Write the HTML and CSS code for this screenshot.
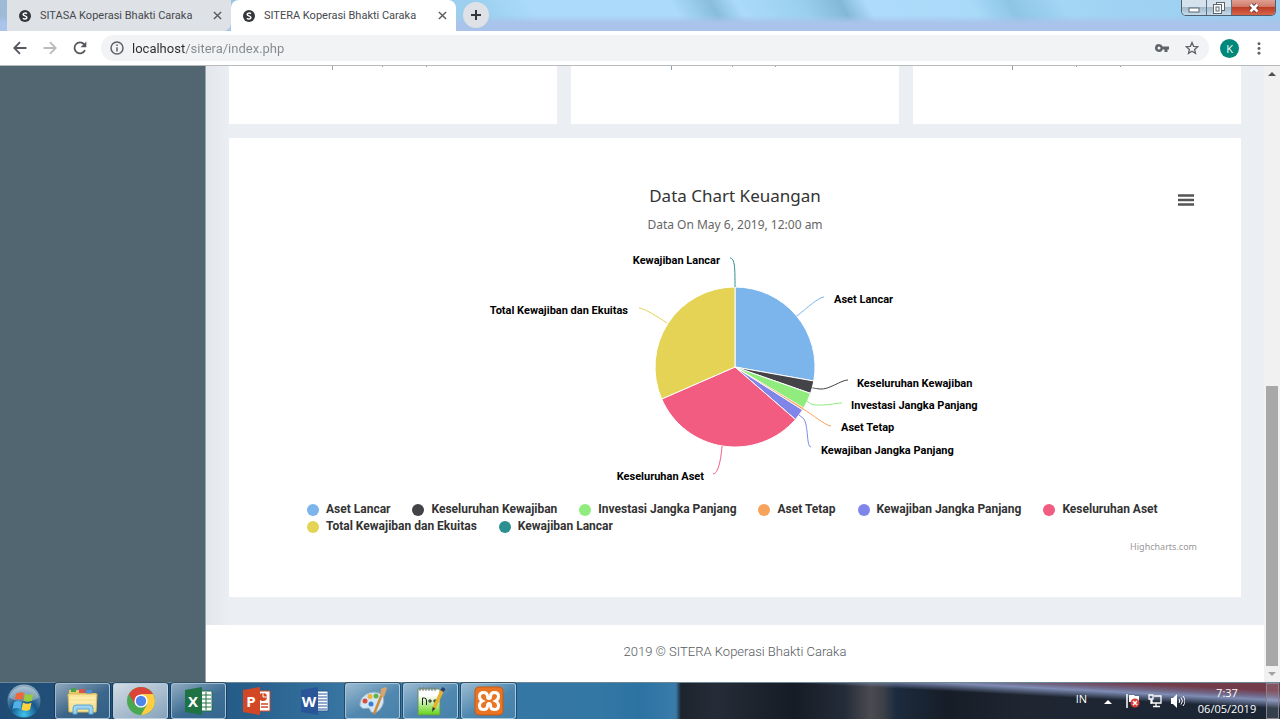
FILE: index.html
```html
<!DOCTYPE html>
<html lang="id">
<head>
<meta charset="utf-8">
<title>SITERA Koperasi Bhakti Caraka</title>
<link rel="stylesheet" href="styles.css">
</head>
<body>
<header class="titlebar">
  <nav class="tabs" aria-label="Tabs">
    <div class="tab">
      <svg class="favicon" viewBox="0 0 12 12"><circle cx="6" cy="6" r="6"/><path d="M8 3.600C6.500 2.600 4 3 4.200 4.600C4.400 6 7.800 5.800 7.900 7.500C7.900 9.200 5 9.300 3.900 8.200"/></svg>
      <a class="tab-title" href="#">SITASA Koperasi Bhakti Caraka</a>
      <button class="tab-close" aria-label="Close tab"><svg viewBox="0 0 10 10"><path d="M1 1l8 8M9 1L1 9"/></svg></button>
    </div>
    <div class="tab tab-active">
      <svg class="favicon" viewBox="0 0 12 12"><circle cx="6" cy="6" r="6"/><path d="M8 3.600C6.500 2.600 4 3 4.200 4.600C4.400 6 7.800 5.800 7.900 7.500C7.900 9.200 5 9.300 3.900 8.200"/></svg>
      <a class="tab-title" href="#">SITERA Koperasi Bhakti Caraka</a>
      <button class="tab-close" aria-label="Close tab"><svg viewBox="0 0 10 10"><path d="M1 1l8 8M9 1L1 9"/></svg></button>
    </div>
    <button class="new-tab" aria-label="New tab"><svg viewBox="0 0 12 12"><path d="M6 1v10M1 6h10"/></svg></button>
  </nav>
  <div class="window-controls">
    <button class="win-btn" aria-label="Minimize"><svg width="12" height="12" viewBox="0 0 12 12"><rect x="1" y="6" width="10" height="4" fill="#fff" stroke="#5b6672"/></svg></button>
    <button class="win-btn" aria-label="Restore"><svg width="12" height="12" viewBox="0 0 12 12" stroke="#5b6672" fill="#fff"><rect x="3.500" y=".5" width="8" height="8"/><rect x=".5" y="2.500" width="8" height="9"/><rect x="3" y="5" width="3" height="4"/></svg></button>
    <button class="win-btn win-close" aria-label="Close"><svg width="12" height="12" viewBox="0 0 12 12"><path d="M2.500 2.500l7 7M9.500 2.500l-7 7" stroke="#6b3a3a" stroke-width="4.500"/><path d="M2.500 2.500l7 7M9.500 2.500l-7 7" stroke="#fff" stroke-width="2.600"/></svg></button>
  </div>
</header>

<div class="toolbar">
  <button class="nav-btn" aria-label="Back"><svg viewBox="0 0 14 14"><path d="M13.500 7H1.500M7 1.200L1.300 7L7 12.800"/></svg></button>
  <button class="nav-btn nav-off" aria-label="Forward"><svg viewBox="0 0 14 14"><path d="M.5 7h12M7 1.200L12.700 7L7 12.800"/></svg></button>
  <button class="nav-btn" aria-label="Reload"><svg viewBox="0 0 14 14"><path d="M12 9.200A5.500 5.500 0 1 1 11.200 3.300"/><path class="solid" d="M13.300.500v5.700H7.600z"/></svg></button>
  <div class="omnibox">
    <svg class="info" viewBox="0 0 14 14"><circle cx="7" cy="7" r="6"/><path d="M7 6.200v4.300M7 3.500v1.600"/></svg>
    <input class="url" type="text" aria-label="Address" value="localhost/sitera/index.php">
    <button class="omni-btn" aria-label="Passwords"><svg viewBox="0 0 14 14"><path fill="#5f6368" fill-rule="evenodd" d="M4 3a4 4 0 1 0 3.700 5.500H9.500V11h3V8.500H14V5.500H7.700A4 4 0 0 0 4 3zM4 5.500a1.500 1.500 0 1 1 0 3a1.500 1.500 0 0 1 0-3z"/></svg></button>
    <button class="omni-btn" aria-label="Bookmark"><svg viewBox="0 0 14 14"><path d="M7 1.500l1.600 3.800 4.100.4-3.100 2.700.9 4L7 10.300l-3.500 2.100.9-4L1.300 5.700l4.100-.4z" fill="none" stroke="#5f6368" stroke-width="1.300"/></svg></button>
  </div>
  <button class="avatar" aria-label="Profile">K</button>
  <button class="more" aria-label="Menu"><svg viewBox="0 0 4 14" fill="#5f6368"><circle cx="2" cy="2" r="1.600"/><circle cx="2" cy="7" r="1.600"/><circle cx="2" cy="12" r="1.600"/></svg></button>
</div>

<div class="viewport">
  <aside class="sidebar"></aside>
  <main class="page">
    <div class="content">
      <div class="cards">
        <section class="card small"><svg width="220" height="4" stroke="#a5a09f"><path d="M103.500 0v4M153.500 0v1M197.500 0v1"/></svg></section>
        <section class="card small"><svg width="220" height="4" stroke="#8fa0ae"><path d="M100.500 0v4M161.500 0v1M204.500 0v1"/></svg></section>
        <section class="card small"><svg width="220" height="4" stroke="#8f9fa0"><path d="M99.500 0v4M163.500 0v1M207.500 0v1"/></svg></section>
      </div>
      <section class="card chart-card">
        <button class="chart-menu" aria-label="Chart context menu"><svg viewBox="0 0 16 12"><path d="M0 1.500h16M0 6h16M0 10.500h16"/></svg></button>
        <h1 class="chart-title">Data Chart Keuangan</h1>
        <p class="chart-sub">Data On May 6, 2019, 12:00 am</p>
        <svg class="pie" width="520" height="240" viewBox="-260 -120 520 240">
          <g class="slices">
            <path fill="#7cb5ec" d="M0 0V-80A80 80 0 0 1 78.800 14z"/>
            <path fill="#434348" d="M0 0L78.800 14A80 80 0 0 1 75.500 26.400z"/>
            <path fill="#90ed7d" d="M0 0L75.500 26.400A80 80 0 0 1 68.700 41z"/>
            <path fill="#f7a35c" stroke-width=".5" d="M0 0L68.700 41A80 80 0 0 1 67.500 42.900z"/>
            <path fill="#8085e9" d="M0 0L67.500 42.900A80 80 0 0 1 60.400 52.500z"/>
            <path fill="#f15c80" d="M0 0L60.400 52.500A80 80 0 0 1 -73.300 32z"/>
            <path fill="#e4d354" d="M0 0L-73.300 32A80 80 0 0 1 0 -80z"/>
          </g>
          <g class="leaders">
            <path stroke="#2b908f" d="M-5 -109C0 -109 0 -98 0 -80"/>
            <path stroke="#7cb5ec" d="M89 -70C84 -70 72 -59 62 -51"/>
            <path stroke="#434348" d="M113 13C106 13 94 23 85 22S80 21 77.500 21"/>
            <path stroke="#90ed7d" d="M107 36C102 36 83 40 76 37L72 34"/>
            <path stroke="#f7a35c" d="M96 59C91 59 77 47 68 42"/>
            <path stroke="#8085e9" d="M76 80C71 80 74 57 68 51L64 48"/>
            <path stroke="#f15c80" d="M-22 107C-17 107 -14 93 -13 79"/>
            <path stroke="#e4d354" d="M-96 -59C-91 -59 -77 -50 -68 -44"/>
          </g>
          <g class="labels">
            <text x="-15" y="-103" text-anchor="end">Kewajiban Lancar</text>
            <text x="-107" y="-53" text-anchor="end">Total Kewajiban dan Ekuitas</text>
            <text x="-31" y="113" text-anchor="end">Keseluruhan Aset</text>
            <text x="99" y="-64">Aset Lancar</text>
            <text x="122" y="20">Keseluruhan Kewajiban</text>
            <text x="116" y="42">Investasi Jangka Panjang</text>
            <text x="106" y="64">Aset Tetap</text>
            <text x="86" y="87">Kewajiban Jangka Panjang</text>
          </g>
        </svg>
        <div class="legend">
          <button class="key blue">Aset Lancar</button>
          <button class="key dark">Keseluruhan Kewajiban</button>
          <button class="key green">Investasi Jangka Panjang</button>
          <button class="key orange">Aset Tetap</button>
          <button class="key purple">Kewajiban Jangka Panjang</button>
          <button class="key pink">Keseluruhan Aset</button>
          <button class="key yellow">Total Kewajiban dan Ekuitas</button>
          <button class="key teal">Kewajiban Lancar</button>
        </div>
        <a class="credits" href="#">Highcharts.com</a>
      </section>
    </div>
    <footer class="footer">2019 © SITERA Koperasi Bhakti Caraka</footer>
  </main>
  <div class="scrollbar">
    <svg viewBox="0 0 16 16"><path d="M4 10l4-4 4 4z" fill="#505050"/></svg>
    <div class="track"><div class="thumb"></div></div>
    <svg viewBox="0 0 16 16"><path d="M4 6l4 4 4-4z" fill="#a3a3a3"/></svg>
  </div>
</div>

<footer class="taskbar">
  <button class="start" aria-label="Start">
    <svg width="36" height="36" viewBox="0 0 36 36">
      <defs><radialGradient id="orb" cx=".5" cy=".9" r=".9"><stop offset="0" stop-color="#3fc4ee"/><stop offset=".45" stop-color="#17558a"/><stop offset="1" stop-color="#9cb6c8"/></radialGradient></defs>
      <circle cx="18" cy="18" r="17" fill="url(#orb)" stroke="#24506f"/>
      <path d="M3 14A16 16 0 0 1 33 14C27 20 9 20 3 14z" fill="#fff" opacity=".3"/>
      <path d="M10 11q4-3 8-1l-1.500 7q-4-2-8 0z" fill="#f0673a"/><path d="M19 10.500q4 2.500 8.500 0L26 17.500q-4 2.500-8.500 0z" fill="#9acb3c"/><path d="M8 19q4-2 8 0l-1.500 7q-4-2-8 0z" fill="#52b0e8"/><path d="M17 19.500q4 2.500 8.500 0L24 26.500q-4 2.500-8.500 0z" fill="#ffd23e"/>
    </svg>
  </button>
  <button class="app open" aria-label="Explorer">
    <svg width="32" height="30" viewBox="0 0 32 30"><path d="M2 4h11l2 3h14v18H2z" fill="#e8c96a"/><path d="M4 2h5v4H4z" fill="#49a04d"/><path d="M12 3h6v4h-6z" fill="#d9534f"/><path d="M19 4h6v4h-6z" fill="#4e8fd0"/><path d="M1 8h29l-1 18H2z" fill="#f8e49b" stroke="#d9b955"/><path d="M3 12h25M3 16h25" stroke="#fff3c2"/><path d="M6 28v-6q0-3 3-3h14q3 0 3 3v6h-4v-5H10v5z" fill="#9bd3f0" stroke="#5fa8d6"/></svg>
  </button>
  <button class="app open current" aria-label="Chrome">
    <svg width="30" height="30" viewBox="0 0 30 30"><circle cx="15" cy="15" r="14" fill="#4aa853"/><path d="M2.900 8A14 14 0 0 1 27.100 8H15L9 18.500z" fill="#dc4437"/><path d="M27.100 8A14 14 0 0 1 15 29L21 18.500L15 8z" fill="#ffcd41"/><circle cx="15" cy="15" r="6.600" fill="#fff"/><circle cx="15" cy="15" r="5.200" fill="#4f86ec"/></svg>
  </button>
  <button class="app open" aria-label="Excel">
    <svg class="office" width="28" height="28" viewBox="0 0 28 28"><path d="M15 4h12v20H15z" fill="#fff" stroke="#207245"/><path d="M16 8h10M16 12h10M16 16h10M16 20h10M21 5v18" stroke="#207245"/><path d="M0 3L17 0v28L0 25z" fill="#1f7244"/><text x="8" y="20" text-anchor="middle">X</text></svg>
  </button>
  <button class="app" aria-label="PowerPoint">
    <svg class="office" width="28" height="28" viewBox="0 0 28 28"><path d="M15 4h12v20H15z" fill="#fff" stroke="#d24726"/><circle cx="20" cy="10" r="4" fill="#d24726"/><path d="M20 6v4h4" stroke="#fff" fill="none"/><path d="M18 17h7M18 20h7" stroke="#d24726" stroke-width="1.500"/><path d="M0 3L17 0v28L0 25z" fill="#d24726"/><text x="8" y="20" text-anchor="middle">P</text></svg>
  </button>
  <button class="app" aria-label="Word">
    <svg class="office" width="28" height="28" viewBox="0 0 28 28"><path d="M15 4h12v20H15z" fill="#fff" stroke="#2a5699"/><path d="M17 7h9M17 10h9M17 13h9M17 16h9M17 19h9M17 22h9" stroke="#2a5699"/><path d="M0 3L17 0v28L0 25z" fill="#2a5699"/><text x="8" y="20" text-anchor="middle">W</text></svg>
  </button>
  <button class="app open" aria-label="Paint">
    <svg width="32" height="30" viewBox="0 0 32 30"><path d="M3 17C4 9 14 4 22 7C29 10 27 18 24 22C20 28 14 28 13 24C12 20 9 24 5 22Q2 20 3 17z" fill="#d3e6f4" stroke="#8cabc2"/><circle cx="8" cy="15" r="2.500" fill="#d84e3b"/><circle cx="13" cy="10.500" r="2.500" fill="#efb33c"/><circle cx="19" cy="10" r="2.500" fill="#5fb548"/><circle cx="14" cy="18" r="2.500" fill="#3c7fd0"/><path d="M17 28L25 8" stroke="#d08a3c" stroke-width="2.500"/><path d="M23 10l1-7q4-3 6-1l-3 9z" fill="#d8a66c"/></svg>
  </button>
  <button class="app open" aria-label="Notepad++">
    <svg width="30" height="32" viewBox="0 0 30 32"><defs><linearGradient id="pad" x2="0" y2="1"><stop offset=".25" stop-color="#fff"/><stop offset="1" stop-color="#63d414"/></linearGradient></defs><path d="M2 4h22v26H2z" fill="url(#pad)" stroke="#6b8e63"/><path d="M4 2v4M7 2v4M10 2v4M13 2v4M16 2v4M19 2v4" stroke="#777"/><path d="M6.500 20v-7h2q2 0 2 3v4M12 16h4M14 14v4M17 16h4M19 14v4" fill="none" stroke="#222"/><path d="M18 23L26 6" stroke="#e9b22b" stroke-width="3.500"/><path d="M16 27l.6-5 2.800 1.500z" fill="#333"/><path d="M24.500 5l2-3 3 2-2 3z" fill="#333b66"/></svg>
  </button>
  <button class="app open" aria-label="XAMPP">
    <svg width="30" height="30" viewBox="0 0 30 30"><rect x="1" y="1" width="28" height="28" rx="4" fill="#e87424" stroke="#c9590f"/><path d="M13.500 10.500q0-4-4-4t-4 4q0 3 3 4.500q-3 1.500-3 4.500q0 4 4 4t4-4q0-2 1.500-2t1.500 2q0 4 4 4t4-4q0-3-3-4.500q3-1.500 3-4.500q0-4-4-4t-4 4q0 2-1.500 2t-1.500-2z" fill="none" stroke="#fff" stroke-width="3"/></svg>
  </button>
  <div class="tray">
    <button class="lang">IN</button>
    <button class="tray-btn" aria-label="Show hidden icons"><svg width="8" height="5" viewBox="0 0 8 5"><path d="M0 5l4-4 4 4z" fill="#fff"/></svg></button>
    <button class="tray-btn" aria-label="Action center"><svg width="16" height="14" viewBox="0 0 16 14"><path d="M2 0v14" stroke="#fff" stroke-width="1.500"/><path d="M4 1h5l1 1h4v6H4z" fill="#fff"/><circle cx="10" cy="9" r="4.500" fill="#dc3e36"/><path d="M8 7l4 4M12 7l-4 4" stroke="#fff" stroke-width="1.500"/></svg></button>
    <button class="tray-btn" aria-label="Network"><svg width="14" height="14" viewBox="0 0 14 14" fill="none" stroke="#fff" stroke-width="1.300"><path d="M6 2h7v7H4V6M8 9v3M5 12.500h7M1 1h4v4H1zM3 5v5"/></svg></button>
    <button class="tray-btn" aria-label="Volume"><svg width="15" height="14" viewBox="0 0 15 14"><path d="M1 4h2l4-4v14l-4-4H1z" fill="#fff"/><path d="M9 5q1.500 2 0 4M11 3.500q3 3.500 0 7M13 2q4 5 0 10" fill="none" stroke="#fff"/></svg></button>
  </div>
  <button class="clock"><time>7:37</time><time>06/05/2019</time></button>
  <button class="show-desktop" aria-label="Show desktop"></button>
</footer>
</body>
</html>
```
FILE: styles.css
```css
* { box-sizing: border-box; }
body {
  margin: 0;
  height: 100vh;
  display: flex;
  flex-direction: column;
  overflow: hidden;
  font-family: "Open Sans", sans-serif;
  font-size: 12px;
  color: #333;
}
button {
  border: 0;
  padding: 0;
  background: none;
  font: inherit;
  color: inherit;
}
a { color: inherit; text-decoration: none; }
svg { display: block; }

/* window title and tabs */
.titlebar {
  flex: none;
  display: flex;
  justify-content: space-between;
  align-items: flex-start;
  height: 31px;
  padding: 0 4px 0 7px;
  background:
    linear-gradient(180deg, transparent 50%, #a9c3ea 75%),
    linear-gradient(60deg, #9db9d6 0, #9cd0ee 38%, #abdafa 42%, #abdafa 53%, #88bddb 56%, #abdafa 58%, #9ad0ee 63%, #84b9d6 66%, #aedbfb 68%, #a9daf8 76%, #8ec5e6 79%, #a3d5f4 83%, #98cdef 100%);
}
.tabs { display: flex; height: 31px; }
.tab {
  display: flex;
  align-items: center;
  width: 224px;
  padding: 0 8px 0 12px;
  background: #dee1e6;
  border-radius: 0 0 8px 0;
}
.tab-active { width: 225px; background: #fff; border-radius: 8px 8px 0 0; }
.favicon { width: 12px; height: 12px; margin-right: 9px; fill: #34373b; }
.favicon path { fill: none; stroke: #fff; stroke-width: 1.500; }
.tab-title { flex: 1; white-space: nowrap; font-family: Roboto, sans-serif; font-size: 11px; color: #45494d; }
.tab-close { width: 12px; height: 20px; display: grid; place-items: center; }
.tab-close svg { width: 9px; height: 9px; stroke: #5a5e63; stroke-width: 1.600; }
.new-tab {
  width: 26px;
  height: 26px;
  margin: 2px 0 0 7px;
  display: grid;
  place-items: center;
  border-radius: 50%;
  background: #dee1e6;
}
.new-tab svg { width: 12px; height: 12px; stroke: #34373b; stroke-width: 2; }
.window-controls {
  display: flex;
  border: 1px solid #4d5f71;
  border-top: 0;
  border-radius: 0 0 5px 5px;
  overflow: hidden;
}
.win-btn {
  width: 25px;
  height: 15px;
  display: grid;
  place-items: center;
  border-right: 1px solid #5e7185;
  background: linear-gradient(#d5e2ec 50%, #a5bbcb 50%, #c5dbea);
}
.win-close { width: 43px; border: 0; background: linear-gradient(#e0a091, #d0796a 45%, #bd3d24 50%, #d6654c); }

/* toolbar */
.toolbar {
  flex: none;
  display: flex;
  align-items: center;
  height: 35px;
  padding: 0 14px 0 13px;
  border-bottom: 1px solid #b8babc;
  background: #fff;
}
.nav-btn { width: 14px; height: 26px; margin-right: 16px; }
.nav-btn svg { width: 14px; height: 14px; fill: none; stroke: #54585d; stroke-width: 1.800; }
.nav-btn .solid { fill: #54585d; stroke: none; }
.nav-off svg { stroke: #b9bbbe; }
.omnibox {
  flex: 1;
  display: flex;
  align-items: center;
  height: 26px;
  margin-left: -2px;
  padding: 0 10px 0 9px;
  border-radius: 13px;
  background: #f1f3f4;
}
.info { width: 14px; height: 14px; fill: none; stroke: #5f6368; stroke-width: 1.500; }
.url {
  flex: 1;
  min-width: 0;
  height: 24px;
  margin-left: 8px;
  padding: 0;
  border: 0;
  outline: 0;
  font: 13px Roboto, sans-serif;
  color: transparent;
  background: linear-gradient(90deg, #2b2e31 53px, #85898d 53px);
  background-clip: text;
  -webkit-background-clip: text;
}
.omni-btn { width: 14px; margin-left: 16px; }
.omni-btn svg { width: 14px; height: 14px; }
.avatar {
  width: 19px;
  height: 19px;
  margin-left: 11px;
  border-radius: 50%;
  background: #00897b;
  color: #fff;
  font-size: 11px;
  line-height: 19px;
}
.more { width: 14px; margin-left: 13px; }
.more svg { width: 4px; height: 13px; margin: auto; }

/* page */
.viewport { flex: 1; min-height: 0; display: flex; overflow: hidden; }
.sidebar { flex: none; width: 206px; background: #516670; border-right: 1px solid #9aa5ae; }
.page {
  flex: 1;
  min-width: 0;
  display: flex;
  flex-direction: column;
  background: linear-gradient(90deg, #e3e7eb, #ebeff4 24px);
}
.content { display: flex; flex-direction: column; gap: 14px; padding: 0 23px 28px; }
.cards { display: grid; grid-template-columns: repeat(3, 1fr); gap: 14px; }
.card { background: #fff; }
.small { min-height: 58px; }
.chart-card {
  position: relative;
  display: flex;
  flex-direction: column;
  align-items: center;
  padding: 45px 44px 44px;
  font-family: "Noto Sans", sans-serif;
}
.chart-title { margin: 0; font-size: 17px; line-height: 26px; font-weight: 400; color: #333; }
.chart-sub { margin: 8px 0 14px; font-size: 12px; line-height: 16px; color: #666; }
.chart-menu { position: absolute; top: 56px; right: 47px; }
.chart-menu svg { width: 16px; height: 12px; stroke: #555; stroke-width: 2.500; }
.pie { overflow: visible; }
.slices { stroke: #fff; stroke-width: 1; stroke-linejoin: round; }
.leaders { fill: none; stroke-width: 1; }
.labels { font: 700 11px Roboto, sans-serif; fill: #000; }
.legend {
  align-self: stretch;
  display: flex;
  flex-wrap: wrap;
  column-gap: 22px;
  margin-top: 14px;
  padding: 0 16px 0 34px;
}
.key {
  display: flex;
  align-items: center;
  gap: 7px;
  font: 700 12px/17px Roboto, sans-serif;
  color: #333;
}
.key::before { content: ""; width: 12px; height: 12px; border-radius: 50%; background: currentColor; }
.blue::before { background: #7cb5ec; }
.dark::before { background: #434348; }
.green::before { background: #90ed7d; }
.orange::before { background: #f7a35c; }
.purple::before { background: #8085e9; }
.pink::before { background: #f15c80; }
.yellow::before { background: #e4d354; }
.teal::before { background: #2b908f; }
.credits { align-self: flex-end; margin-top: 6px; font-size: 9px; line-height: 12px; color: #999; }
.footer {
  flex: 1;
  padding-top: 17px;
  background: #fff;
  text-align: center;
  font: 300 13px/20px Roboto, sans-serif;
  color: #555b60;
}
.scrollbar { flex: none; width: 16px; display: flex; flex-direction: column; background: #f1f1f1; }
.scrollbar svg { flex: none; width: 16px; height: 16px; }
.track { flex: 1; display: flex; align-items: flex-end; padding: 0 2px; }
.thumb { width: 100%; height: 48%; background: #a8a8a8; }

/* taskbar */
.taskbar {
  flex: none;
  display: flex;
  height: 37px;
  padding-right: 1px;
  gap: 3px;
  border-top: 1px solid #6d8794;
  background:
    linear-gradient(3deg, transparent 62%, #7f8db5 74%, #6f6483 80%, #743c4b 88%) right / 600px 100% no-repeat,
    linear-gradient(90deg, #204b74 0, #255c88 18%, #3a78a5 28%, #3377a4 47%, #2c73a3 50%, #3a7ba9 52.800%, #1c242e 53.200%, #262c37 56%, #161c25 62%, #242c39 66%, #4b4b50 68%, #3d4048 69%, #1c2b3e 70%, #171d27 74%, #1f2632 80%, #1a2535 100%);
}
.start { width: 52px; padding-left: 6px; overflow: hidden; }
.start svg { margin-top: -1px; }
.app {
  width: 55px;
  height: 36px;
  display: grid;
  place-items: center;
}
.open {
  border: 1px solid rgba(190, 215, 232, .75);
  border-radius: 3px;
  background: linear-gradient(150deg, rgba(255, 255, 255, .5), rgba(255, 255, 255, .12) 55%, rgba(255, 255, 255, .08));
  box-shadow: 0 0 0 1px rgba(15, 40, 62, .55);
}
.current { background: linear-gradient(150deg, rgba(255, 255, 255, .8), rgba(255, 255, 255, .45)); }
.office text { font: 700 15px "Open Sans", sans-serif; fill: #fff; }
.tray { display: flex; align-items: center; gap: 7px; margin-left: auto; color: #fff; }
.lang { margin-right: 10px; padding-bottom: 5px; font-size: 11px; }
.tray-btn { min-width: 8px; }
.tray-btn + .tray-btn { min-width: 15px; }
.tray-btn:nth-child(3) { margin-left: 6px; }
.clock {
  width: 72px;
  margin-left: 3px;
  display: flex;
  flex-direction: column;
  justify-content: center;
  align-items: center;
  font-size: 11px;
  line-height: 16px;
  color: #fff;
}
.show-desktop { width: 13px; border: 1px solid #8b8290; background: rgba(255, 255, 255, .12); }
```
